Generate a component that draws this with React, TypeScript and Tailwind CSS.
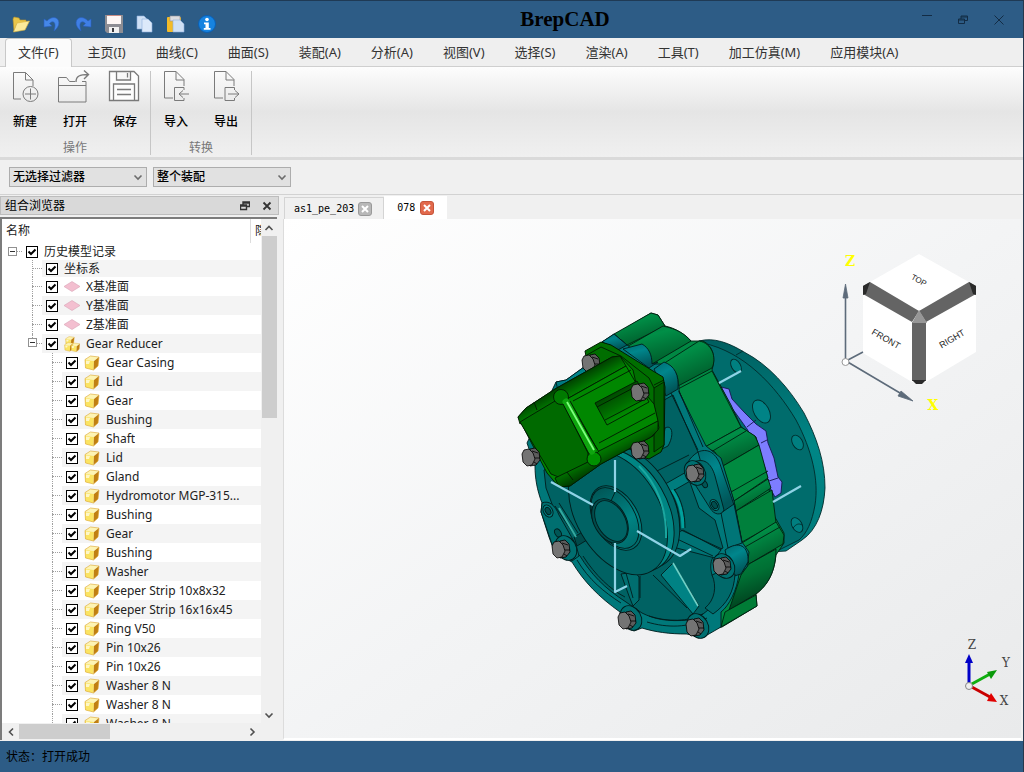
import React, { useState } from 'react';

interface TreeItem {
  id: string;
  label: string;
  level: 0 | 1 | 2;
  icon?: 'plane' | 'assembly' | 'part';
  expandable?: boolean;
  short?: boolean;
}

const partNames = [
  'Gear Casing', 'Lid', 'Gear', 'Bushing', 'Shaft', 'Lid', 'Gland', 'Hydromotor MGP-315...', 'Bushing', 'Gear',
  'Bushing', 'Washer', 'Keeper Strip 10x8x32', 'Keeper Strip 16x16x45', 'Ring V50', 'Pin 10x26', 'Pin 10x26',
  'Washer 8 N', 'Washer 8 N', 'Washer 8 N',
];

const treeItems: TreeItem[] = [
  { id: 'history', label: '历史模型记录', level: 0, expandable: true, short: true },
  { id: 'axes', label: '坐标系', level: 1, short: true },
  { id: 'px', label: 'X基准面', level: 1, icon: 'plane' },
  { id: 'py', label: 'Y基准面', level: 1, icon: 'plane' },
  { id: 'pz', label: 'Z基准面', level: 1, icon: 'plane' },
  { id: 'reducer', label: 'Gear Reducer', level: 1, icon: 'assembly', expandable: true },
  ...partNames.map((label, i): TreeItem => ({ id: `part-${i}`, label, level: 2, icon: 'part' })),
];

const menus = [
  '文件(F)', '主页(I)', '曲线(C)', '曲面(S)', '装配(A)', '分析(A)', '视图(V)', '选择(S)', '渲染(A)', '工具(T)',
  '加工仿真(M)', '应用模块(A)',
];

const quickActions: { label: string; art: React.ReactNode }[] = [
  {
    label: '打开',
    art: (
      <>
        <path d="M1 4 L2 2 L7 3 L8 5 L14 5 L14 8 L5 9 L2 16 Z" fill="#e9c64a" stroke="#b8922a" strokeWidth=".6" />
        <path d="M5 8 L17.5 6 L13 15 L1.5 17 Z" fill="#fbea9a" stroke="#d8b23c" strokeWidth=".6" />
      </>
    ),
  },
  {
    label: '撤销',
    art: <path d="M1 4 L1 12 L9 11 L6.5 8.5 C10 5 14 7 11 16 C18 11 17 3 11 2.5 C8 2.5 6 4 4 6 Z" fill="#4587e8" stroke="#2a5fc0" strokeWidth=".6" />,
  },
  {
    label: '重做',
    art: <path d="M17 4 L17 12 L9 11 L11.500 8.500 C8 5 4 7 7 16 C0 11 1 3 7 2.500 C10 2.500 12 4 14 6 Z" fill="#3f7fe6" stroke="#2a5fc0" strokeWidth=".6" />,
  },
  {
    label: '保存',
    art: (
      <>
        <path d="M0 0 H18 V18 H2 L0 16 Z" fill="#8d8d93" />
        <rect x="2" y="0" width="14" height="9" fill="#fdf6f4" />
        <rect x="2" y="0" width="14" height="1" fill="#c98d85" />
        <rect x="4" y="12" width="10" height="6" fill="#f0f0f0" />
        <rect x="7" y="13" width="2" height="4" fill="#3c3c40" />
      </>
    ),
  },
  {
    label: '复制',
    art: (
      <>
        <path d="M1 1 H8 L11 4 V14 H1 Z" fill="#cfe0f5" stroke="#8fb0dc" strokeWidth=".6" />
        <path d="M6 4 H12 L16 8 V17 H6 Z" fill="#dce9fa" stroke="#8fb0dc" strokeWidth=".6" />
      </>
    ),
  },
  {
    label: '粘贴',
    art: (
      <>
        <rect x="0" y="2" width="14" height="15" rx="1" fill="#f3bb28" />
        <rect x="3" y="1" width="10" height="5" fill="#dcdce0" stroke="#8f8f96" strokeWidth=".6" />
        <path d="M6 5 H13 L17 9 V17 H6 Z" fill="#cfe0f5" stroke="#8fb0dc" strokeWidth=".6" />
      </>
    ),
  },
  {
    label: '关于',
    art: (
      <>
        <circle cx="9" cy="9" r="8.500" fill="#1683e0" stroke="#0b5fb4" />
        <circle cx="9" cy="4.500" r="1.800" fill="#fff" />
        <path d="M6 7.500 H10.800 V13 H12.500 V14.800 H5.800 V13 H7.500 V9.300 H6 Z" fill="#fff" />
      </>
    ),
  },
];

const ribbonGroups: { title: string; tools: { label: string; art: React.ReactNode }[] }[] = [
  {
    title: '操作',
    tools: [
      {
        label: '新建',
        art: (
          <>
            <path d="M13 28 H5.500 V1.500 H17.500 L25 9 V15 M17.500 1.500 V9 H25" />
            <circle cx="22.500" cy="23" r="7.500" />
            <path d="M17 23 H28 M22.500 17.500 V28.500" />
          </>
        ),
      },
      {
        label: '打开',
        art: (
          <>
            <path d="M17 10.500 H11.500 L8.500 6.500 H.5 V31 H28 V10.500 H24 M.5 14.500 H28" />
            <path d="M18 11 C18 5 22 3.500 30 3.500 M26 -.5 L30.500 3.500 L26 8" strokeWidth="1.400" />
          </>
        ),
      },
      {
        label: '保存',
        art: (
          <>
            <path d="M1.500 .5 H26 L30.500 5 V29.500 H1.500 Z M8.500 .5 V9 H22.500 V.5 M19.500 2 V6.500 M5.500 29.500 V13 H26.500 V29.500" fill="#fdfdfd" strokeWidth="1.300" />
            <path d="M9 18.500 H23 M9 23.500 H23" strokeWidth="1.300" />
          </>
        ),
      },
    ],
  },
  {
    title: '转换',
    tools: [
      {
        label: '导入',
        art: (
          <>
            <path d="M14 27 H5.500 V.5 H17 L25 8.500 V15 M17 .5 V9 H25" />
            <path d="M25 19 V16.500 H15.500 V29.500 H25 V27" />
            <path d="M30 23 H20 M24 19.500 L20 23 L24 26.500" />
          </>
        ),
      },
      {
        label: '导出',
        art: (
          <>
            <path d="M14 27 H5.500 V.5 H17 L25 8.500 V15 M17 .5 V9 H25" />
            <path d="M25.500 19 V16.500 H16 V29.500 H25.500 V27" />
            <path d="M19 23 H30 M26 19.500 L30 23 L26 26.500" />
          </>
        ),
      },
    ],
  },
];

function Chevron({ dir, className = '' }: { dir: 'up' | 'down' | 'left' | 'right'; className?: string }) {
  const d = {
    up: 'M1.500 7 L5 3.500 L8.500 7',
    down: 'M1.500 3.500 L5 7 L8.500 3.500',
    left: 'M7 1.500 L3.500 5 L7 8.500',
    right: 'M3.500 1.500 L7 5 L3.500 8.500',
  }[dir];
  return (
    <svg viewBox="0 0 10 10" className={`size-2.5 ${className}`} fill="none" stroke="#505050" strokeWidth="1.600">
      <path d={d} />
    </svg>
  );
}

function RestoreGlyph({ color, width = 1 }: { color: string; width?: number }) {
  return (
    <svg viewBox="0 0 10 10" className="size-2.5" fill="none" stroke={color} strokeWidth={width}>
      <path d="M.5 4 H6.500 V8.500 H.5 Z M.5 5 H6.500 M3 4 V1 H9.500 V5.500 H7 M3 2 H9.500" />
    </svg>
  );
}

function TitleBar() {
  return (
    <header className="flex h-[38px] shrink-0 items-center border-t border-[#1f3a55] bg-[#2d5c86] pl-3">
      <div className="mt-2 flex gap-[13px]">
        {quickActions.map((a) => (
          <button key={a.label} aria-label={a.label} className="size-[18px]">
            <svg viewBox="0 0 18 18" className="size-full">{a.art}</svg>
          </button>
        ))}
      </div>
      <h1 className="flex-1 pr-2 text-center font-['Liberation_Serif',serif] text-[21px] font-bold text-black">BrepCAD</h1>
      <div className="flex items-center gap-[26px] pr-[19px]">
        <button aria-label="最小化" className="size-2.5">
          <svg viewBox="0 0 10 10" className="size-full" stroke="#132c45"><path d="M0 .5 H10" /></svg>
        </button>
        <button aria-label="还原"><RestoreGlyph color="#132c45" /></button>
        <button aria-label="关闭" className="size-2.5">
          <svg viewBox="0 0 10 10" className="size-full" stroke="#132c45"><path d="M.5 .5 L9.500 9.500 M9.500 .5 L.5 9.500" /></svg>
        </button>
      </div>
    </header>
  );
}

function MenuBar() {
  const [active, setActive] = useState(0);
  return (
    <nav className="flex h-[29px] shrink-0 border-b border-[#cfcfcf] bg-[#efefef] pl-[5px]">
      {menus.map((m, i) => (
        <button
          key={m}
          onClick={() => setActive(i)}
          className={`h-[29px] whitespace-nowrap text-[13px] text-[#333] ${i === active ? 'mr-px rounded-t-sm border border-b-0 border-[#c8c8c8] bg-[#fbfbfb] px-3' : 'px-[15px]'}`}
        >
          {m}
        </button>
      ))}
    </nav>
  );
}

function Ribbon() {
  return (
    <div className="flex h-[93px] shrink-0 border-b-3 border-[#dadada] bg-linear-to-b from-[#fdfdfd] via-[#e5e5e5] to-[#f0f0f0] pt-1 pb-0.5">
      {ribbonGroups.map((g) => (
        <section key={g.title} aria-label={g.title} className="flex flex-col border-r border-[#c6c6c6]">
          <div className="flex">
            {g.tools.map((t) => (
              <button key={t.label} className="flex w-[50px] flex-col items-center text-xs font-medium text-black">
                <svg viewBox="0 0 34 34" className="mb-[5px] size-[34px] overflow-visible" fill="none" stroke="#7a7a7a" strokeWidth="1">{t.art}</svg>
                <span className="leading-6">{t.label}</span>
              </button>
            ))}
          </div>
          <span className="mt-2 text-center text-xs/3 text-[#777]">{g.title}</span>
        </section>
      ))}
    </div>
  );
}

function FilterSelect({ label, options }: { label: string; options: string[] }) {
  return (
    <label className="relative flex">
      <span className="sr-only">{label}</span>
      <select className="h-5 w-[138px] appearance-none border border-[#adadad] bg-[#e1e1e1] pl-[3px] text-xs/[18px] font-medium text-black">
        {options.map((o) => <option key={o}>{o}</option>)}
      </select>
      <Chevron dir="down" className="pointer-events-none absolute top-[5px] right-1 opacity-80" />
    </label>
  );
}

function ItemIcon({ kind }: { kind: NonNullable<TreeItem['icon']> }) {
  if (kind === 'plane') {
    return (
      <svg viewBox="0 0 16 16" className="mr-1.5 size-4 shrink-0">
        <path d="M0 7.500 L8 2.500 L16 7.500 L8 12.500 Z" fill="#f3bfd0" stroke="#d9a3b5" strokeWidth=".6" />
      </svg>
    );
  }
  const cube = (
    <>
      <path d="M1 4.500 L6.500 1 L15 2 L10 6 Z" fill="#fdf4b4" />
      <path d="M1 4.500 L10 6 L9.500 15 L1.500 13 Z" fill="#fbe462" />
      <path d="M10 6 L15 2 L14 11 L9.500 15 Z" fill="#c07f12" />
      <path d="M2 5.500 L6 6 L5 9 L2 9 Z" fill="#fffbe0" opacity=".8" />
      <path d="M1 4.500 L6.500 1 L15 2 L14 11 L9.500 15 L1.500 13 Z" fill="none" stroke="#dba52c" strokeWidth=".6" />
    </>
  );
  if (kind === 'part') {
    return <svg viewBox="0 0 16 16" className="mr-1.5 size-4 shrink-0">{cube}</svg>;
  }
  return (
    <svg viewBox="0 0 16 16" className="mr-1.5 size-4 shrink-0">
      <g transform="translate(1 0) scale(.62)">{cube}</g>
      <g transform="translate(0 6) scale(.62)">{cube}</g>
      <g transform="translate(6.500 6.500) scale(.62)">{cube}</g>
    </svg>
  );
}

function TreeRow({ item, striped, last }: { item: TreeItem; striped: boolean; last: boolean }) {
  return (
    <li className={`flex shrink-0 ${item.short ? 'h-[17px]' : 'h-[19px]'}`}>
      {item.level > 0 && <span className={item.level === 1 ? 'w-5' : 'w-10'} />}
      <span className="relative flex w-5 shrink-0 items-center justify-end">
        {item.level > 0 && (
          <span className={`absolute top-0 left-[10px] border-l border-dotted border-[#a0a0a0] ${last ? 'h-1/2' : 'h-full'}`} />
        )}
        <span className="w-[10px] border-t border-dotted border-[#a0a0a0]" />
        {item.expandable && (
          <button aria-label="折叠" className="absolute top-1 left-1.5 flex size-[9px] items-center justify-center border border-[#919191] bg-white">
            <span className="h-px w-[5px] bg-[#333]" />
          </button>
        )}
      </span>
      <label className={`flex min-w-0 flex-1 items-center pl-1 ${striped ? 'bg-[#f4f4f4]' : ''}`}>
        <span className="relative mr-1.5 size-3 shrink-0">
          <input type="checkbox" defaultChecked className="peer block size-3 appearance-none border border-black bg-white" />
          <svg viewBox="0 0 12 12" className="pointer-events-none absolute inset-0 hidden size-3 peer-checked:block" fill="none" stroke="#000" strokeWidth="2">
            <path d="M2.500 5.500 L5 8 L9.500 3.500" />
          </svg>
        </span>
        {item.icon && <ItemIcon kind={item.icon} />}
        <span className="truncate text-xs text-[#222]">{item.label}</span>
      </label>
    </li>
  );
}

function BrowserPanel() {
  return (
    <aside className="flex w-[279px] shrink-0 flex-col">
      <div className="mb-0.5 flex h-[19px] shrink-0 items-center border border-[#bdbdbd] bg-[#d9d9d9] pr-[6px] pl-1">
        <h2 className="flex-1 text-xs text-black">组合浏览器</h2>
        <button aria-label="浮动" className="mr-3"><RestoreGlyph color="#333" width={1.4} /></button>
        <button aria-label="关闭面板">
          <svg viewBox="0 0 10 10" className="size-2.5" stroke="#333" strokeWidth="1.800"><path d="M1.500 1.500 L8.500 8.500 M8.500 1.500 L1.500 8.500" /></svg>
        </button>
      </div>
      <div className="mr-0.5 flex min-h-0 flex-1 flex-col border-t-2 border-l-2 border-[#7c7c7c] bg-white">
        <div className="flex min-h-0 flex-1">
          <div className="flex min-w-0 flex-1 flex-col">
            <div className="flex h-[24px] shrink-0 items-center text-xs text-[#222]">
              <span className="flex-1 pl-1">名称</span>
              <span className="h-full w-[11px] overflow-hidden border-l border-[#ddd] pl-1 leading-6 whitespace-nowrap">隐藏</span>
            </div>
            <ul className="flex min-h-0 flex-1 flex-col overflow-hidden">
              {treeItems.map((item, i) => (
                <TreeRow key={item.id} item={item} striped={i % 2 === 1} last={item.id === 'reducer'} />
              ))}
            </ul>
          </div>
          <div className="flex w-4 shrink-0 flex-col items-center bg-[#f0f0f0]">
            <button aria-label="向上滚动" className="flex h-[17px] items-center"><Chevron dir="up" /></button>
            <div className="h-[182px] w-[15px] bg-[#cdcdcd]" />
            <button aria-label="向下滚动" className="mt-auto flex h-[17px] items-center"><Chevron dir="down" /></button>
          </div>
        </div>
        <div className="flex h-[17px] shrink-0 items-center bg-[#f0f0f0] pr-5">
          <button aria-label="向左滚动" className="flex w-[17px] justify-center"><Chevron dir="left" /></button>
          <div className="h-[15px] w-[91px] bg-[#cdcdcd]" />
          <button aria-label="向右滚动" className="ml-auto"><Chevron dir="right" /></button>
        </div>
      </div>
    </aside>
  );
}

function Bolt({ x, y }: { x: number; y: number }) {
  return (
    <g transform={`translate(${x} ${y})`} stroke="#000" strokeWidth=".8">
      <path d="M-1 -8 L4 -9 L8 -5 L9 3 L5 8 L-1 9 Z" fill="#5c5c5c" />
      <path d="M1 -6 L7 -4 M2 1 L9 1 M3 5 L6 7" />
      <path d="M-9 -3 L-7 -7 L-2 -8 L2 -4 L4 2 L1 8 L-4 9 L-8 5 Z" fill="#747474" />
    </g>
  );
}

function GearReducerModel() {
  return (
    <svg viewBox="510 305 330 340" className="absolute top-[86px] left-[225px] h-[340px] w-[330px]" strokeLinejoin="round" role="img" aria-label="Gear Reducer">
      <defs>
        <linearGradient id="rim" x1="0" y1="0" x2="0" y2="1">
          <stop offset="0" stopColor="#005f60" /><stop offset=".5" stopColor="#008686" /><stop offset="1" stopColor="#007a7a" />
        </linearGradient>
        <linearGradient id="lobe" x1="0" y1="0" x2=".5" y2="1">
          <stop offset="0" stopColor="#006a34" /><stop offset=".35" stopColor="#008f47" /><stop offset="1" stopColor="#005c2b" />
        </linearGradient>
        <linearGradient id="under" x1="0" y1="0" x2=".3" y2="1">
          <stop offset="0" stopColor="#008a42" /><stop offset=".5" stopColor="#007034" /><stop offset="1" stopColor="#003c1c" />
        </linearGradient>
        <linearGradient id="band" x1="0" y1="0" x2=".4" y2="1">
          <stop offset="0" stopColor="#006a70" /><stop offset=".4" stopColor="#00868c" /><stop offset="1" stopColor="#005558" />
        </linearGradient>
        <linearGradient id="motorTop" gradientUnits="userSpaceOnUse" x1="590" y1="368" x2="600" y2="386">
          <stop offset="0" stopColor="#003a00" /><stop offset=".7" stopColor="#007a00" /><stop offset="1" stopColor="#008a00" />
        </linearGradient>
        <linearGradient id="motorBottom" gradientUnits="userSpaceOnUse" x1="618" y1="436" x2="628" y2="455">
          <stop offset="0" stopColor="#008a00" /><stop offset=".5" stopColor="#006800" /><stop offset="1" stopColor="#003a00" />
        </linearGradient>
        <linearGradient id="slot" gradientUnits="userSpaceOnUse" x1="612" y1="394" x2="624" y2="415">
          <stop offset="0" stopColor="#004a00" /><stop offset=".6" stopColor="#006d00" /><stop offset="1" stopColor="#008a00" />
        </linearGradient>
        <linearGradient id="boss" x1="0" y1="0" x2="1" y2="0">
          <stop offset="0" stopColor="#005555" /><stop offset=".6" stopColor="#008383" /><stop offset="1" stopColor="#006a6a" />
        </linearGradient>
      </defs>

      {/* output flange */}
      <g stroke="#002a2a" strokeWidth=".9">
        <path d="M700 341 C715 337 730 343 745 352 C770 365 790 388 805 413 C818 438 826 462 826 488 C825 510 818 530 803 540 L787 551 L770 552 Z" fill="url(#rim)" />
        <path d="M704 343 C745 352 776 385 797 420 C813 450 820 480 816 505 C813 522 808 533 800 540 L780 550 L740 545 Z" fill="#006c6c" />
        <path d="M737 355 L744 351" />
        <ellipse cx="737" cy="366" rx="7.500" ry="4.500" transform="rotate(60 737 366)" fill="#008080" />
        <ellipse cx="762.500" cy="411.500" rx="12.500" ry="7.500" transform="rotate(60 762.500 411.500)" fill="#008386" />
        <ellipse cx="798.500" cy="442.500" rx="8" ry="5" transform="rotate(60 798.500 442.500)" fill="#007f80" />
        <ellipse cx="798" cy="525" rx="8" ry="5" transform="rotate(60 798 525)" fill="#007f80" />
        <path d="M794 528 C797 524 800 523 803 525" fill="none" />
      </g>

      {/* gasket */}
      <path d="M722 387 L730 389 L733 399 L745 412 L757 424 L767 431 L769 443 L775 458 L779 477 L783 482 L782 493 L776 497 L771 488 L766 468 L757 444 L748 429 L733 408 Z" fill="#7d7dff" stroke="#15154f" strokeWidth=".9" />

      {/* casing */}
      <g stroke="#001f10" strokeWidth=".9">
        <path d="M603 342 L652 313 L659 315 L666 326 C676 328 686 334 692 341 L704 341 C714 346 717 357 713 370 L732 405 L742 427 L757 437 L761 452 L769 481 L773 512 L785 533 L785 543 L777 555 C775 575 768 585 757 594 L758 606 L723 627 L700 630 L640 480 Z" fill="#008843" />
        <path d="M615 334 L652 313 L659 315 L666 326 L628 345 Z" fill="url(#lobe)" />
        <path d="M624 349 L664 326 C678 329 686 334 692 341 L653 364 C646 355 635 350 624 349 Z" fill="url(#lobe)" />
        <path d="M664 364 L700 341 C713 343 718 358 713 368 L679 386 C680 373 674 366 664 364 Z" fill="url(#lobe)" />
        <path d="M679 389 L713 371 L742 427 L706 447 Z" fill="#008a42" />
        <path d="M706 447 L742 427 L756 436 L760 445 L724 466 L716 452 Z" fill="url(#lobe)" />
        <path d="M724 466 L760 445 L769 478 L735 501 Z" fill="#008a40" />
        <path d="M735 501 L769 479 L772 488 L737 511 Z" fill="url(#lobe)" />
        <path d="M737 511 L773 490 L777 523 L743 542 Z" fill="#00803c" />
        <path d="M743 543 L777 522 L785 535 L784 544 L750 564 Z" fill="url(#lobe)" />
        <path d="M750 564 L777 549 C777 572 768 586 757 594 L730 610 L742 575 Z" fill="url(#under)" />
        <path d="M726 612 L757 595 L758 606 L722 627 Z" fill="#007c36" />
        <path d="M712 452 L747 431 M732 492 L769 471 M746 547 L781 527" fill="none" />
      </g>
      <path d="M748 427 L757 420 M762 443 L768 440 M770 481 L779 478" stroke="#15154f" strokeWidth=".9" />

      {/* front cover */}
      <g stroke="#001c1c" strokeWidth=".9">
        <path d="M557 382 L567 380 L585 367 L603 342 L615 334 L628 345 L653 364 L664 364 L680 386 L680 392 L707 446 L722 458 L735 501 L743 542 L750 552 L748 567 L740 574 C738 590 730 606 722 612 L722 627 L703 638 L688 634 C670 634 656 632 643 628 L635 631 L622 625 L621 612 C600 597 585 582 573 562 L556 553 L550 537 L542 512 L543 503 C538 490 536 478 536 466 L528 443 Z" fill="#00787a" />
        <path d="M603 342 L615 334 L628 345 L619 350 Z" fill="url(#band)" />
        <path d="M624 349 L643 344 C650 348 653 355 653 364 L659 362 L650 368 Z" fill="url(#band)" />
        <path d="M655 369 L665 362 C676 366 680 375 679 389 L667 396 Z" fill="url(#band)" />
        <path d="M557 382 L567 380 L585 367 L600 375 L560 395 Z" fill="url(#band)" />
        <path d="M667 399 L674 395 L699 452 C690 458 686 464 688 474 L700 508 L716 520 L724 548 C712 554 710 564 713 575 L722 590 C718 602 712 608 704 614 L690 620 C668 622 655 619 643 613 L627 602 C605 588 592 574 581 556 L570 545 L556 512 L547 488 L545 470 Z" fill="#006263" />
        <path d="M672 393 L699 450 M680 391 L704 447" fill="none" />
        <path d="M699 452 C708 448 716 452 721 464 L735 505 L725 513 L704 470 Z" fill="url(#band)" />
        <path d="M722 513 L735 504 L743 543 L729 548 Z" fill="#007577" />
        <path d="M726 550 C740 540 750 546 749 562 L742 574 L732 577 Z" fill="url(#band)" />
        <path d="M695 462 C704 458 712 462 716 476 L725 510 C722 516 715 515 711 508 L697 486 Z" fill="#006b6c" />
        <path d="M543 503 C550 500 556 505 560 515 L577 545 L580 556 L573 561 L556 553 L542 512 Z" fill="#006f70" />
        <path d="M556 506 L576 536 M560 503 L579 533 M578 560 C590 580 605 592 622 603 M584 556 C596 575 612 590 626 597 M650 616 C668 622 690 622 704 614 M648 622 C668 628 690 628 708 618" fill="none" />
        <path d="M713 575 C722 570 730 574 736 574 C735 592 728 604 714 614 L706 608 C716 600 718 586 713 575 Z" fill="#00696a" />
      </g>

      {/* ribs */}
      <g stroke="#001c1c" strokeWidth=".9">
        <path d="M654 491 L696 467 L700 476 L658 500 Z" fill="#007d7e" />
        <path d="M648 476 L690 455" fill="none" />
        <path d="M664 540 L684 530 L722 550 L716 558 L670 546 Z" fill="#007274" />
        <path d="M662 575 L674 563 L700 606 L694 614 Z" fill="#008284" />
        <path d="M674 563 L699 606" stroke="#6fd0c6" strokeWidth="1.600" />
        <path d="M654 575 L688 608 M682 530 L723 549 M676 538 L714 556" fill="none" />
        <path d="M622 574 L636 572 L640 577 L640 600 L634 606 L630 596 Z" fill="#006e6f" />
        <path d="M627 573 L634 598 M641 576 L641 598" fill="none" />
        <path d="M575 537 L585 531 L588 540 L578 546 Z" fill="#004a4a" />
        <path d="M673 490 C680 500 684 514 684 528" fill="none" stroke="#00a09c" strokeWidth="3" />
        <path d="M671 491 C678 501 681 515 681 530 M675 489 C683 500 686 514 686 528" fill="none" />
        <path d="M560 508 L577 537" stroke="#33aaa0" strokeWidth="2" />
        <path d="M666 428 C674 424 675 436 669 446 L663 449 Z" fill="#007a7c" />
      </g>

      {/* central boss */}
      <g stroke="#001c1c" strokeWidth=".9">
        <ellipse cx="630" cy="507" rx="67" ry="44" transform="rotate(60 630 507)" fill="#00696a" />
        <ellipse cx="625" cy="510" rx="67" ry="43" transform="rotate(60 625 510)" fill="#008583" />
        <ellipse cx="619" cy="513" rx="67" ry="42" transform="rotate(60 619 513)" fill="#006364" />
        <path d="M640 466 C657 483 668 508 667 538" fill="none" stroke="#1ba7a0" strokeWidth="2" />
        <ellipse cx="617" cy="518" rx="35" ry="22" transform="rotate(60 617 518)" fill="url(#boss)" />
        <ellipse cx="616" cy="518" rx="33" ry="20" transform="rotate(60 616 518)" fill="none" />
        <ellipse cx="611" cy="521" rx="24" ry="16" transform="rotate(60 611 521)" fill="#004c4c" />
        <ellipse cx="612" cy="521" rx="22" ry="14" transform="rotate(60 612 521)" fill="#006364" />
        <path d="M612 501 L617 490" />
      </g>

      {/* small holes */}
      <g stroke="#001c1c" strokeWidth=".9">
        <ellipse cx="549" cy="511" rx="6.500" ry="4.500" transform="rotate(60 549 511)" fill="#007f80" />
        <ellipse cx="549" cy="511" rx="4" ry="2.500" transform="rotate(60 549 511)" fill="#004e4e" />
        <ellipse cx="559" cy="533" rx="4.500" ry="3" transform="rotate(60 559 533)" fill="#005656" />
        <ellipse cx="715.500" cy="505" rx="6" ry="4" transform="rotate(60 715.500 505)" fill="#007f80" />
        <ellipse cx="715.500" cy="505" rx="4" ry="2.500" transform="rotate(60 715.500 505)" fill="#004e4e" />
        <ellipse cx="705.500" cy="484" rx="4" ry="2.500" transform="rotate(60 705.500 484)" fill="#005656" />
        <ellipse cx="696" cy="473" rx="13" ry="10" transform="rotate(60 696 473)" fill="#006f70" />
        <ellipse cx="725" cy="566" rx="13" ry="10" transform="rotate(60 725 566)" fill="#006f70" />
        <ellipse cx="699" cy="626" rx="13" ry="10" transform="rotate(60 699 626)" fill="#006f70" />
        <ellipse cx="632" cy="618" rx="13" ry="10" transform="rotate(60 632 618)" fill="#006f70" />
        <ellipse cx="567" cy="548" rx="13" ry="10" transform="rotate(60 567 548)" fill="#006f70" />
      </g>

      {/* motor mounting plate */}
      <path d="M586 351 L602 342 L612 345 L654 371 L664 377 L666 387 L665 445 L662 452 L650 459 L640 456 L600 380 L588 362 Z" fill="#006e00" stroke="#001a00" />
      <path d="M588 355 L602 347 L622 356 L650 378 L655 388 M655 385 L665 380" fill="none" stroke="#001a00" strokeWidth=".9" />
      <path d="M655 388 L665 382 L665 445 L655 452 Z" fill="#005c00" stroke="#001a00" strokeWidth=".9" />

      <Bolt x={592} y={363} />

      {/* motor body */}
      <g stroke="#001a00" strokeWidth=".9">
        <path d="M519 417 L527 408 L556 389 L613 357 L621 356 L634 370 L637 383 L655 405 L660 428 L654 436 L602 464 L571 486 L560 487 L548 473 Z" fill="#008600" />
        <path d="M519 417 L527 408 L556 389 L613 357 L621 356 L627 366 L568 399 L521 424 Z" fill="url(#motorTop)" />
        <path d="M568 399 L627 366 L637 383 L655 404 L659 421 L600 452 Z" fill="#008700" />
        <path d="M521 422 L556 401 L564 403 L589 453 L589 462 L562 478 L552 474 Z" fill="#006a00" />
        <path d="M589 462 L600 451 L659 421 L659 430 L652 437 L602 464 L571 486 L560 487 L556 478 Z" fill="url(#motorBottom)" />
        <path d="M596 403 L638 381 L650 402 L608 425 Z" fill="url(#slot)" />
        <path d="M598 407 L638 386 M606 420 L646 399 M574 401 L632 370 M600 443 L656 413" fill="none" />
        <circle cx="562" cy="397" r="7.500" fill="#007a00" />
        <circle cx="595" cy="459" r="7" fill="#009000" />
      </g>
      <path d="M567 402 L593 451" stroke="#0fa50f" strokeWidth="7" strokeLinecap="round" />
      <path d="M568 402 L595 450" stroke="#7dff7d" strokeWidth="1.800" />
      <path d="M564 404 L590 454 M571 401 L598 449 M535 402 L538 410 M574 480 L568 472" stroke="#001a00" strokeWidth=".9" />

      <Bolt x={641} y={392} />
      <Bolt x={641} y={450} />
      <Bolt x={532} y={457} />
      <Bolt x={562} y={549} />
      <Bolt x={628} y={620} />
      <Bolt x={696} y={473} />
      <Bolt x={723} y={566} />
      <Bolt x={696} y={627} />

      {/* datum axes */}
      <g fill="none" stroke="#8fd3e6" strokeWidth="2.200">
        <path d="M616 460 V492 M552 482 L594 505 M638 531 L681 556 L692 549 M616 543 V592 L628 586" />
        <path d="M720 383 L742 371 M774 502 L802 486" />
      </g>
    </svg>
  );
}

function ViewCube() {
  return (
    <svg viewBox="835 250 150 165" className="absolute top-[31px] right-9 h-[165px] w-[150px]" role="img" aria-label="视图方向">
      <path d="M863 286 L919 254 L976 286 V352 L926 382 H912 L863 353 Z" fill="#fff" />
      <path d="M863 286 L870 282 L919 311 L912 322 L863 294 Z M976 286 L969 282 L919 311 L926 322 L976 294 Z" fill="#646464" />
      <rect x="912" y="322" width="14" height="59" fill="#646464" />
      <path d="M919 310 L927 323 H912 Z" fill="#979797" />
      <path d="M863 286 L870 282 L866 294 L863 295 Z M976 286 L969 282 L973 294 L976 295 Z M912 380 H926 L922 384 H916 Z" fill="#2a2a2a" />
      <g fontFamily="'Liberation Sans', sans-serif" fontSize="9" fill="#222" textAnchor="middle">
        <text x="919" y="283" fontSize="8" transform="rotate(28 919 280)">TOP</text>
        <text x="886" y="342" transform="rotate(30 886 339)">FRONT</text>
        <text x="952" y="342" transform="rotate(-30 952 339)">RIGHT</text>
      </g>
      <g stroke="#5d6b7a" strokeWidth="1.600" fill="#5d6b7a">
        <path d="M845.500 361 V297 M846 361 L863 352 M846 361 L900 393" />
        <path d="M845.500 284 L848 298 H843 Z M913 401 L898 396 L901 391 Z" strokeWidth=".8" />
      </g>
      <circle cx="845.500" cy="362" r="3.500" fill="#fff" stroke="#999" />
      <g fontFamily="'DejaVu Serif', serif" fontSize="14" fontWeight="700" fill="#ffff00" textAnchor="middle">
        <text x="850" y="266">Z</text>
        <text x="933" y="410">X</text>
      </g>
    </svg>
  );
}

function AxisTriad() {
  return (
    <svg viewBox="960 636 54 76" className="absolute right-[7px] bottom-[27px] h-[76px] w-[54px]" role="img" aria-label="坐标轴">
      <path d="M969 686 V660" stroke="#0000c8" strokeWidth="3" />
      <path d="M969 655 L973 664 H965 Z" fill="#0000c8" />
      <path d="M970 686 L990 675" stroke="#0fae0f" strokeWidth="3" />
      <path d="M997 671 L991 680 L987 673 Z" fill="#0a9a0a" />
      <path d="M970 687 L990 698" stroke="#c80000" strokeWidth="3" />
      <path d="M997 703 L987 702 L991 694 Z" fill="#e00000" />
      <circle cx="969" cy="687" r="3.500" fill="#eee" stroke="#888" />
      <g fontFamily="'DejaVu Serif', serif" fontSize="12" fill="#444" textAnchor="middle">
        <text x="972" y="650">Z</text>
        <text x="1006" y="668">Y</text>
        <text x="1004" y="706">X</text>
      </g>
    </svg>
  );
}

function CloseBadge({ name, active }: { name: string; active: boolean }) {
  return (
    <button aria-label={`关闭 ${name}`} className={`size-3.5 rounded-[3px] border ${active ? 'border-[#c5553a] bg-[#e2694c]' : 'border-[#999] bg-[#b8b8b8]'}`}>
      <svg viewBox="0 0 12 12" className="size-full" stroke="#fff" strokeWidth="2"><path d="M3 3 L9 9 M9 3 L3 9" /></svg>
    </button>
  );
}

function Workspace() {
  return (
    <main className="flex min-w-0 flex-1 flex-col pr-0.5">
      <div className="flex h-[23px] shrink-0 items-end pl-px font-['DejaVu_Sans_Mono',monospace] text-[10px] text-black">
        <div className="flex h-[22px] items-center gap-1 border border-b-0 border-[#d4d4d4] pr-[11px] pl-[9px]">
          <button>as1_pe_203</button>
          <CloseBadge name="as1_pe_203" active={false} />
        </div>
        <div className="flex h-[23px] items-center gap-[5px] bg-white pr-[13px] pl-[13px]">
          <button>078</button>
          <CloseBadge name="078" active />
        </div>
      </div>
      <div className="relative min-h-0 flex-1 overflow-hidden border-b-2 border-l border-[#dcdcdc] border-b-white bg-linear-to-br from-white via-[#f3f4f5] to-[#e9eaeb]">
        <GearReducerModel />
        <ViewCube />
        <AxisTriad />
      </div>
    </main>
  );
}

export default function App() {
  return (
    <div className="flex h-screen flex-col overflow-hidden border-r border-[#26384c] bg-[#f0f0f0] font-['Noto_Sans','Noto_Sans_CJK_SC',sans-serif]">
      <TitleBar />
      <MenuBar />
      <Ribbon />
      <div className="flex h-[35px] shrink-0 items-center gap-1.5 border-b border-[#d2d2d2] pb-px pl-[9px]">
        <FilterSelect label="选择过滤器" options={['无选择过滤器']} />
        <FilterSelect label="选择范围" options={['整个装配']} />
      </div>
      <div className="flex min-h-0 flex-1 gap-1 py-px">
        <BrowserPanel />
        <Workspace />
      </div>
      <footer className="flex h-[31px] shrink-0 items-center bg-[#2d5c86] pl-[6px] text-xs text-black">状态：打开成功</footer>
    </div>
  );
}
